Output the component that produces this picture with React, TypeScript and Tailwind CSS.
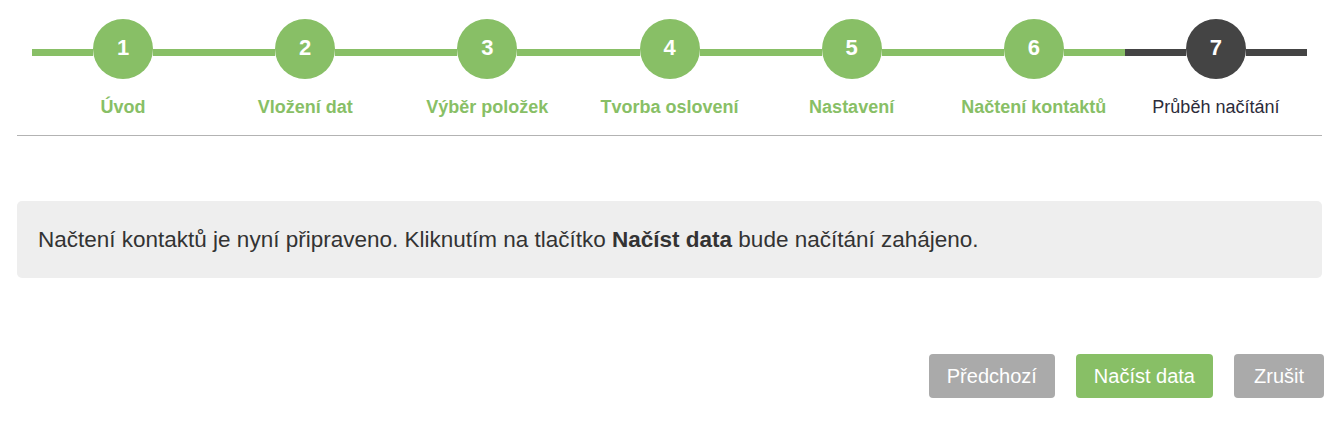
import React from 'react';

const steps = [
  { n: 1, label: 'Úvod' },
  { n: 2, label: 'Vložení dat' },
  { n: 3, label: 'Výběr položek' },
  { n: 4, label: 'Tvorba oslovení' },
  { n: 5, label: 'Nastavení' },
  { n: 6, label: 'Načtení kontaktů' },
  { n: 7, label: 'Průběh načítání' },
];

const current = 7;

const Step: React.FC<{ n: number; label: string }> = ({ n, label }) => {
  const active = n === current;
  const line = active ? 'bg-[#444444]' : 'bg-[#88bf66]';
  return (
    <div className="flex-1 flex flex-col items-center">
      <div className="w-full flex">
        <div className={`flex-1 h-[7px] mt-[30px] ${line}`}></div>
        <div
          className={`w-[60px] h-[60px] rounded-full flex items-center justify-center text-white font-bold text-[22px] leading-none pb-[2px] ${
            active ? 'bg-[#444444]' : 'bg-[#88bf66]'
          }`}
        >
          {n}
        </div>
        <div className={`flex-1 h-[7px] mt-[30px] ${line}`}></div>
      </div>
      <div
        className={`mt-[16px] text-[18px] leading-[25px] whitespace-nowrap ${
          active ? 'text-[#2c2c3a] font-normal' : 'text-[#88bf66] font-bold'
        }`}
      >
        {label}
      </div>
    </div>
  );
};

export default function App() {
  return (
    <div className="w-[1339px] h-[421px] bg-white font-['Liberation_Sans',Arial,sans-serif] overflow-hidden">
      <div className="mx-[17px] pt-[19px]">
        <div className="flex px-[15px]">
          {steps.map((s) => (
            <Step key={s.n} n={s.n} label={s.label} />
          ))}
        </div>
        <div className="mt-[15px] h-px bg-[#b3b3b3]"></div>

        <div className="mt-[65px] bg-[#eeeeee] rounded-[5px] px-[21px] py-[24px] text-[22.5px] leading-[29px] text-[#333333]">
          Načtení kontaktů je nyní připraveno. Kliknutím na tlačítko <b className="font-bold">Načíst data</b> bude načítání
          zahájeno.
        </div>

        <div className="mt-[76px] -mr-[2px] flex justify-end gap-[21px]">
          <button className="h-[44px] px-[18px] rounded-[4px] bg-[#aaaaaa] text-white text-[20px]">Předchozí</button>
          <button className="h-[44px] px-[18px] rounded-[4px] bg-[#88bf66] text-white text-[20px]">Načíst data</button>
          <button className="h-[44px] px-[20px] rounded-[4px] bg-[#aaaaaa] text-white text-[20px]">Zrušit</button>
        </div>
      </div>
    </div>
  );
}
